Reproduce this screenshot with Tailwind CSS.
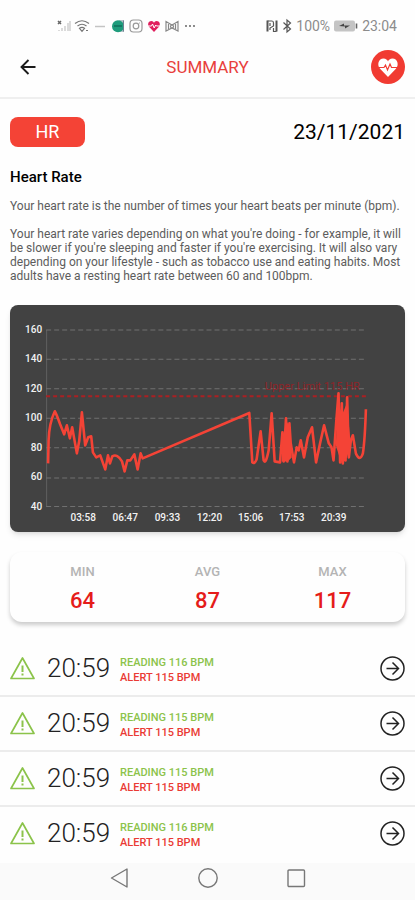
<!DOCTYPE html>
<html lang="en">
<head>
<meta charset="utf-8">
<meta name="viewport" content="width=device-width, initial-scale=1">
<title>Summary</title>
<script src="https://cdn.jsdelivr.net/npm/@tailwindcss/browser@4"></script>
</head>
<body class="min-h-screen flex flex-col bg-[#fefefe] font-['Roboto',sans-serif] text-black">
<!-- Status bar -->
<div class="flex items-center justify-between pt-4 pl-14 pr-[18px] h-9 text-[#8c8c8c]">
  <div class="flex items-center gap-0.5">
    <svg class="w-4 h-4" viewBox="0 0 16 16"><path d="M3 13v-1M6 13v-3M9 13V8M12 13V5M14 13V3" stroke="#d2d2d2" stroke-width="1.6"/><path d="M2 3l3 3M5 3L2 6" stroke="#666" stroke-width="1.5"/></svg>
    <svg class="w-4 h-4" viewBox="0 0 16 16" fill="none" stroke="#777" stroke-width="1.2"><path d="M1 5.500Q8 0 15 5.500M3.500 8Q8 4.500 12.500 8M5.500 10.300Q8 8.500 10.500 10.300L8 13.300z"/><path d="M12 12.500h2"/></svg>
    <svg class="w-4 h-4" viewBox="0 0 16 16"><path d="M3 8.500h10" stroke="#c4c4c4" stroke-width="1.500"/></svg>
    <svg class="w-4 h-4" viewBox="0 0 16 16"><path d="M9 2h5v12h-5z" fill="#b8c4cb"/><circle cx="8" cy="8.200" r="6" fill="#1f9c7c"/><path d="M4 8h8" stroke="#126e5b" stroke-width="1.500"/><path d="M13.500 2.500v11" stroke="#6e8190"/></svg>
    <svg class="w-4 h-4" viewBox="0 0 16 16" fill="none" stroke="#999" stroke-width="1.200"><rect x="2" y="2" width="12" height="12" rx="3.500"/><circle cx="8" cy="8" r="2.800"/><path d="M11 5h.8"/></svg>
    <svg class="w-4 h-4" viewBox="-2 0 16 16"><path d="M6 14L1 8.800C-1 6 .8 3 3.300 3 4.800 3 5.600 4 6 4.800 6.400 4 7.200 3 8.700 3 11.200 3 13 6 11 8.800z" fill="#e01f5d"/><path d="M0 8h3.500l1-2 1.700 4 1.500-3 .8 1H12" fill="none" stroke="#fff" stroke-width="1"/></svg>
    <svg class="w-4 h-4" viewBox="0 0 16 16" fill="none" stroke="#888" stroke-width="1.200"><path d="M2 13V3.500L8 7l6-3.500V13L8 10z"/><path d="M4.500 6v5M11.500 6v5"/><circle cx="8" cy="8.500" r="1.500"/></svg>
    <svg class="w-4 h-4" viewBox="-2 0 16 16" fill="#555"><circle cx="2" cy="8" r=".9"/><circle cx="6" cy="8" r=".9"/><circle cx="10" cy="8" r=".9"/></svg>
  </div>
  <div class="flex items-center gap-1 text-sm leading-4">
    <svg class="w-3 h-4" viewBox="0 0 12 16" fill="none" stroke="#555" stroke-width="2"><path d="M1.500 2.500V13.500M10.500 2.500V13.500"/><path d="M1.500 3H6Q7.500 3 7.500 5V8L4 10V12" stroke-width="1.200"/><path d="M4 5v3M7.500 10v3.500h3" stroke-width="1.200"/></svg>
    <svg class="w-2.5 h-4" viewBox="0 0 10 16" fill="none" stroke="#555" stroke-width="1.200"><path d="M1.500 4.500l7 6.500L5 14V2l3.500 3-7 6.500"/></svg>
    <span>100%</span>
    <svg class="w-6 h-4" viewBox="0 0 24 16"><rect x="0" y="2.500" width="21" height="11" rx="2" fill="#c4c4c4"/><path d="M22.500 5.500v5" stroke="#666" stroke-width="1.600"/><path d="M5 8l5-2.500v2h6L11 10.500v-2z" fill="#444"/></svg>
    <span>23:04</span>
  </div>
</div>
<!-- App bar -->
<header class="grid grid-cols-[1fr_auto_1fr] items-center h-[63px] px-2.5 border-b-2 border-[#efefef]">
  <button type="button" aria-label="Back" class="justify-self-start w-9 h-9 grid place-items-center">
    <svg class="w-4 h-4" viewBox="0 0 16 16" fill="none" stroke="#1b1b1b" stroke-width="1.900"><path d="M15.500 8H1.500M8.500 1L1.500 8l7 7"/></svg>
  </button>
  <h1 class="text-[17px] leading-6 text-[#e8403c]">SUMMARY</h1>
  <button type="button" aria-label="Heart rate" class="justify-self-end w-[34px] h-[34px]">
    <svg viewBox="0 0 34 34"><circle cx="17" cy="17" r="17" fill="#f13b32"/><path d="M17 27L9.300 19C5.500 15 7.500 8.500 12.500 8.500c2.500 0 3.800 1.400 4.500 2.900.7-1.500 2-2.900 4.500-2.900 5 0 7 6.500 3.200 10.500z" fill="#fff"/><path d="M8 17.500h5l1.500-2.500 2 5 2.500-6 1.500 3.500H26" fill="none" stroke="#f13b32" stroke-width="1.200"/></svg>
  </button>
</header>
<main class="flex-1 flex flex-col">
  <div class="px-2.5">
    <div class="flex items-center justify-between pt-[18px]">
      <span class="w-[75px] h-[30px] rounded-lg bg-[#f44336] text-white text-lg leading-[30px] text-center">HR</span>
      <time datetime="2021-11-23" class="text-[21px] leading-[30px]">23/11/2021</time>
    </div>
    <h2 class="mt-5 text-[15px] leading-5 font-medium">Heart Rate</h2>
    <div class="mt-3 flex flex-col gap-3.5 text-xs leading-[14px] text-[#5c5c5c]">
      <p>Your heart rate is the number of times your heart beats per minute (bpm).</p>
      <p>Your heart rate varies depending on what you're doing - for example, it will be slower if you're sleeping and faster if you're exercising. It will also vary depending on your lifestyle - such as tobacco use and eating habits. Most adults have a resting heart rate between 60 and 100bpm.</p>
    </div>
    <!-- Heart rate over the day -->
    <figure class="mt-[22px] rounded-lg bg-[#424242] shadow-md">
      <svg class="block w-full" viewBox="0 0 394 226" role="img" aria-label="Heart rate chart">
        <path d="M36.500 25V201" stroke="#606060"/>
        <path d="M36 25H355M36 54H355M36 83.500H355M36 113H355M36 142.500H355M36 172.500H355M36 201H355" stroke="#707070" stroke-dasharray="5 3"/>
        <path d="M36 91H355" stroke="#aa2023" stroke-width="2" stroke-dasharray="4 3"/>
        <text x="349" y="85" text-anchor="end" font-size="11" fill="#8e2428">Upper Limit 115 HR</text>
        <path d="M38 158L38.500 135Q39 118 44.700 106Q46 108 50 119L54 129L56.700 120L59.700 133L62 122L66.700 148L69 136L71.700 107L75 140L78 132L81 131L82.700 147L86 152L90 150L95 164L97.700 150L99.700 158L102 151Q107 148 111.700 156L114.300 166L117 155H120L124 149L127.300 164L130.300 148L132.300 153L238.700 107.700L241.700 157Q244 159 246 154L250 126L253 155Q255 160 258 145L261 108L264 156L269.300 157L271.700 127L273 156L275.300 113L276.700 156L278.700 118L280 138L283.300 157L286 142L288 145L290 135L293.300 152L297 132L301.300 122L305.300 157L309.300 138L313.300 120L318 138L320.700 142L322.700 155L325.300 118L327.700 88L329.300 157L331 98L332 158L333.700 125L334.700 155L336.300 92L338 152L340 135L342 130L345 148Q349 157 352 148Q354 135 355 104" fill="none" stroke="#f44336" stroke-width="2.600" stroke-linejoin="round"/>
        <path d="M271 156L272 130L276 116L279 122L281 152L277 156ZM325 140L327 96L331 110L336 98L340 140L336 152L330 156Z" fill="#f44336"/>
        <g font-size="10" font-weight="500" fill="#f2f2f2" text-anchor="end">
          <text x="32" y="28">160</text><text x="32" y="57">140</text><text x="32" y="87">120</text><text x="32" y="116">100</text><text x="32" y="146">80</text><text x="32" y="175">60</text><text x="32" y="204">40</text>
        </g>
        <g font-size="10" font-weight="500" fill="#f2f2f2" text-anchor="middle">
          <text x="73" y="215">03:58</text><text x="115" y="215">06:47</text><text x="157" y="215">09:33</text><text x="199" y="215">12:20</text><text x="240" y="215">15:06</text><text x="281" y="215">17:53</text><text x="323" y="215">20:39</text>
        </g>
      </svg>
    </figure>
    <dl class="mt-5 px-2.5 pt-3 pb-3 flex justify-around rounded-xl shadow-[0_3px_4px_rgb(0_0_0/0.2)] text-center">
      <div class="flex-1"><dt class="text-[13px] leading-4 font-medium text-[#b4b4b4]">MIN</dt><dd class="mt-3 text-[22px] leading-[18px] font-medium text-[#e51c1a]">64</dd></div>
      <div class="flex-1"><dt class="text-[13px] leading-4 font-medium text-[#b4b4b4]">AVG</dt><dd class="mt-3 text-[22px] leading-[18px] font-medium text-[#e51c1a]">87</dd></div>
      <div class="flex-1"><dt class="text-[13px] leading-4 font-medium text-[#b4b4b4]">MAX</dt><dd class="mt-3 text-[22px] leading-[18px] font-medium text-[#e51c1a]">117</dd></div>
    </dl>
  </div>
  <ul id="alerts" class="mt-5"></ul>
</main>
<template id="alert-row">
  <li class="flex items-center h-[55px] px-2.5 border-b-2 border-[#ececec] last:border-transparent">
    <svg class="w-[25px] h-6" viewBox="0 0 25 24" fill="none" stroke="#8bc34a" stroke-width="1.700" stroke-linejoin="round"><path d="M12.500 2L24 22.500H1z"/><path d="M12.500 9.500v6.500M12.500 17.500v2" stroke-width="2"/></svg>
    <time class="w-[73px] pl-3 text-[26px] leading-8 font-light text-[#222]">20:59</time>
    <p class="flex-1 pl-3 pt-1 text-[11px] leading-[15px] font-medium"><span class="reading block text-[#8bc34a]"></span><span class="block text-[#ea3a34]">ALERT 115 BPM</span></p>
    <button type="button" aria-label="Open alert" class="w-[25px] h-[25px]">
      <svg viewBox="0 0 25 25" fill="none" stroke="#222" stroke-width="1.500"><circle cx="12.500" cy="12.500" r="11.500"/><path d="M6.500 12.500h12M12.500 6.500l6 6-6 6"/></svg>
    </button>
  </li>
</template>
<!-- System navigation -->
<nav class="flex justify-center items-center gap-[68px] h-[37px] pb-2 bg-[#fafafa]">
  <button type="button" aria-label="Back" class="w-5 h-5"><svg viewBox="0 0 20 20" fill="none" stroke="#777" stroke-width="1.400"><path d="M17 1v18L1.500 10z" stroke-linejoin="round"/></svg></button>
  <button type="button" aria-label="Home" class="w-5 h-5"><svg viewBox="0 0 20 20" fill="none" stroke="#777" stroke-width="1.400"><circle cx="10" cy="10" r="9.200"/></svg></button>
  <button type="button" aria-label="Recent apps" class="w-5 h-5"><svg viewBox="0 0 20 20" fill="none" stroke="#777" stroke-width="1.400"><rect x="2" y="2" width="16.500" height="16.500" rx="1"/></svg></button>
</nav>
<script>
  const list = document.getElementById('alerts');
  const row = document.getElementById('alert-row');
  for (const bpm of [116, 115, 115, 116]) {
    const item = row.content.cloneNode(true);
    item.querySelector('.reading').textContent = `READING ${bpm} BPM`;
    list.append(item);
  }
</script>
</body>
</html>
